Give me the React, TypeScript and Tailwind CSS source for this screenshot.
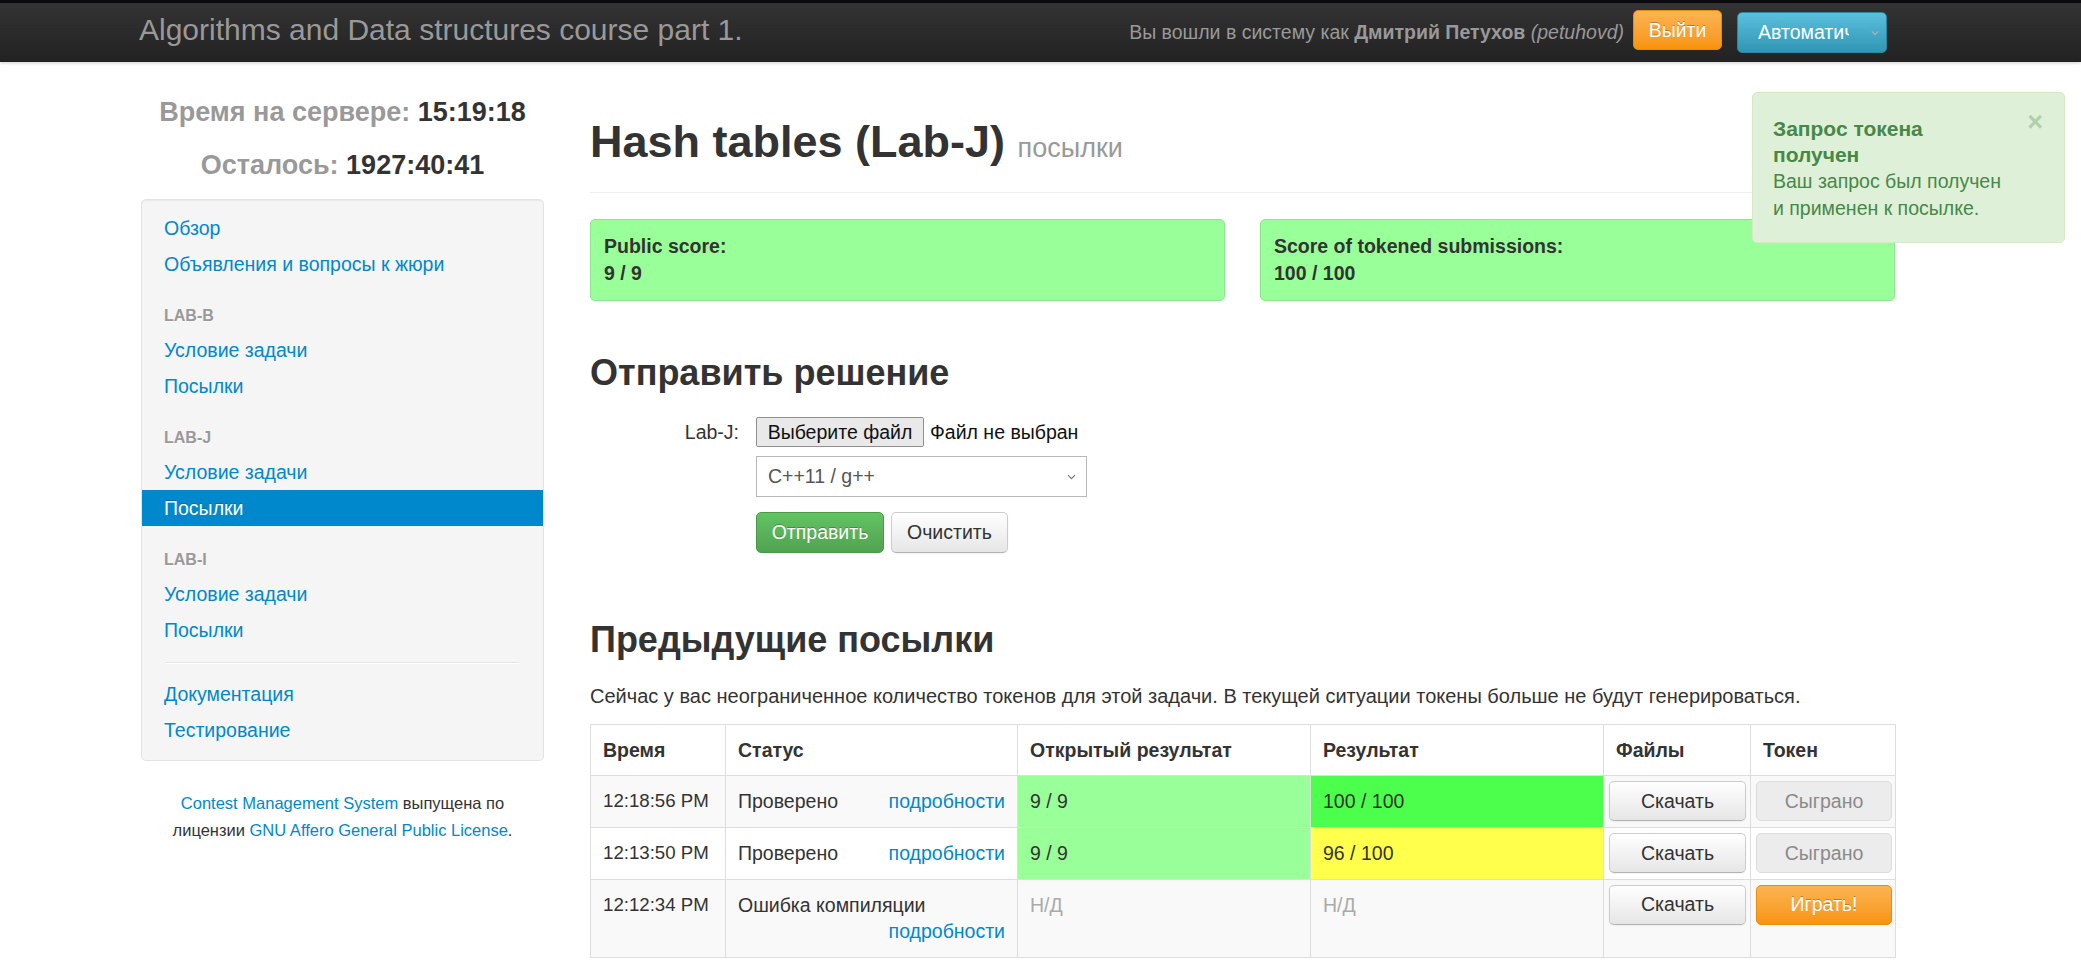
import React from "react";

const Chevron = ({ color = "#666", w = 9, h = 6, sw = 1.2 }: { color?: string; w?: number; h?: number; sw?: number }) => (
  <svg width={w} height={h} viewBox="0 0 9 6" fill="none">
    <path d="M1 1.2l3.5 3.5L8 1.2" stroke={color} strokeWidth={sw} />
  </svg>
);

const NavItem = ({ label, active = false }: { label: string; active?: boolean }) => (
  <div
    className={
      "h-[36px] leading-[36px] pl-[22px] " +
      (active ? "bg-[#0088cc] text-white [text-shadow:0_-1px_0_rgba(0,0,0,0.2)]" : "text-[#0088cc]")
    }
  >
    {label}
  </div>
);

const NavHeader = ({ label }: { label: string }) => (
  <div className="mt-[14px] h-[36px] leading-[40px] pl-[22px] text-[16px] font-bold uppercase text-[#999] [text-shadow:0_1px_0_rgba(255,255,255,0.5)]">
    {label}
  </div>
);

const DefaultBtn = ({ children, className = "" }: { children: React.ReactNode; className?: string }) => (
  <div
    className={
      "flex items-center justify-center rounded-[5px] border border-[#ccc] border-b-[#b3b3b3] bg-linear-to-b from-white to-[#e6e6e6] text-[#333] shadow-[inset_0_1px_0_rgba(255,255,255,0.2),0_1px_2px_rgba(0,0,0,0.05)] " +
      className
    }
  >
    {children}
  </div>
);

const DisabledBtn = ({ children }: { children: React.ReactNode }) => (
  <div className="flex h-[40px] w-full items-center justify-center rounded-[5px] border border-[#dcdcdc] bg-[#ececec] text-[#8a8a8a]">
    {children}
  </div>
);

const WarnBtn = ({ children, className = "" }: { children: React.ReactNode; className?: string }) => (
  <div
    className={
      "flex items-center justify-center rounded-[5px] border border-[#e38d13] bg-linear-to-b from-[#fbb450] to-[#f89406] text-white [text-shadow:0_-1px_0_rgba(0,0,0,0.25)] " +
      className
    }
  >
    {children}
  </div>
);

const cell = "border border-[#ddd] px-[12px] py-[12px] align-top";
const btnCell = "border border-[#ddd] p-[5px] align-top";

export default function App() {
  return (
    <div className="relative min-h-[960px] bg-white font-['Liberation_Sans',Arial,sans-serif] text-[19.5px] leading-[26.67px] text-[#333]">
      {/* Navbar */}
      <div className="flex h-[62px] border-t-[3px] border-[#0b0b0f] bg-linear-to-b from-[#333333] to-[#222222] shadow-[0_1px_3px_rgba(0,0,0,0.2)]">
        <div className="ml-[139px] mt-[12px] text-[30px] leading-[30px] text-[#999]">
          Algorithms and Data structures course part 1.
        </div>
        <div className="ml-auto mr-[194px] flex items-start">
          <span className="mt-[16px] whitespace-nowrap text-[#999]">
            Вы вошли в систему как <b>Дмитрий Петухов</b> <i>(petuhovd)</i>
          </span>
          <WarnBtn className="ml-[9px] mt-[7px] h-[40px] w-[89px]">Выйти</WarnBtn>
          <div className="relative ml-[15px] mt-[9px] flex h-[41px] w-[150px] items-center rounded-[5px] border border-[#2a87a2] bg-linear-to-b from-[#5bc0de] to-[#2f96b4]">
            <span className="ml-[20px] w-[91px] overflow-hidden whitespace-nowrap text-white">Автоматически</span>
            <span className="absolute right-[7px] top-[17px] flex">
              <Chevron color="#a3b3bb" w={8} h={6} sw={1.4} />
            </span>
          </div>
        </div>
      </div>

      {/* Body */}
      <div className="flex">
        {/* Sidebar */}
        <div className="ml-[141px] w-[403px] shrink-0">
          <div className="pt-[24px] text-center text-[27px] font-bold leading-[53px]">
            <div>
              <span className="text-[#999]">Время на сервере:</span> <span className="text-[#333]">15:19:18</span>
            </div>
            <div>
              <span className="text-[#999]">Осталось:</span> <span className="text-[#333]">1927:40:41</span>
            </div>
          </div>
          <div className="mt-[7px] rounded-[5px] border border-[#e3e3e3] bg-[#f5f5f5] pt-[10px] pb-[12px] shadow-[inset_0_1px_1px_rgba(0,0,0,0.05)]">
            <NavItem label="Обзор" />
            <NavItem label="Объявления и вопросы к жюри" />
            <NavHeader label="Lab-B" />
            <NavItem label="Условие задачи" />
            <NavItem label="Посылки" />
            <NavHeader label="Lab-J" />
            <NavItem label="Условие задачи" />
            <NavItem label="Посылки" active />
            <NavHeader label="Lab-I" />
            <NavItem label="Условие задачи" />
            <NavItem label="Посылки" />
            <div className="mx-[24px] mt-[14px] mb-[12px] h-[2px] border-b border-white bg-[#e5e5e5]" />
            <NavItem label="Документация" />
            <NavItem label="Тестирование" />
          </div>
          <div className="mt-[29px] text-center text-[16.5px] leading-[27px]">
            <span className="text-[#0088cc]">Contest Management System</span> выпущена по
            <br />
            лицензии <span className="text-[#0088cc]">GNU Affero General Public License</span>.
          </div>
        </div>

        {/* Main */}
        <div className="ml-[46px] w-[1305px] shrink-0">
          <div className="mt-[53px] border-b border-[#eee] pb-[17px]">
            <h1 className="text-[45px] font-bold leading-[53px] text-[#333]">
              Hash tables (Lab-J) <small className="text-[27px] font-normal text-[#999]">посылки</small>
            </h1>
          </div>

          <div className="mt-[26px] grid grid-cols-2 gap-[35px]">
            <div className="h-[82px] rounded-[5px] border border-[#8de58d] bg-[#99ff99] px-[13px] pt-[13px] font-bold leading-[27px]">
              Public score:
              <br />9 / 9
            </div>
            <div className="h-[82px] rounded-[5px] border border-[#8de58d] bg-[#99ff99] px-[13px] pt-[13px] font-bold leading-[27px]">
              Score of tokened submissions:
              <br />100 / 100
            </div>
          </div>

          <h2 className="mt-[45px] text-[36px] font-bold leading-[53px]">Отправить решение</h2>

          <div className="mt-[18px] flex h-[30px] items-center">
            <div className="w-[149px] text-right">Lab-J:</div>
            <div className="ml-[17px] flex h-[30px] w-[168px] items-center justify-center rounded-[2px] border border-[#8f8f8f] bg-[#e9e9e9] text-[#111]">
              Выберите файл
            </div>
            <span className="ml-[6px] text-[#111]">Файл не выбран</span>
          </div>
          <div className="ml-[166px] mt-[9px] flex h-[41px] w-[331px] items-center justify-between border border-[#b8b8b8] bg-white pl-[11px] pr-[10px] text-[#555]">
            <span>C++11 / g++</span>
            <Chevron color="#777" w={9} h={6} />
          </div>
          <div className="ml-[166px] mt-[15px] flex gap-[7px]">
            <div className="flex h-[41px] w-[128px] items-center justify-center rounded-[5px] border border-[#4a9a4a] bg-linear-to-b from-[#62c462] to-[#51a351] text-white [text-shadow:0_-1px_0_rgba(0,0,0,0.25)]">
              Отправить
            </div>
            <DefaultBtn className="h-[41px] w-[117px]">Очистить</DefaultBtn>
          </div>

          <h2 className="mt-[60px] text-[36px] font-bold leading-[53px]">Предыдущие посылки</h2>
          <p className="mt-[17px] text-[20px]">
            Сейчас у вас неограниченное количество токенов для этой задачи. В текущей ситуации токены больше не будут генерироваться.
          </p>

          <table className="mt-[14px] w-[1305px] table-fixed border-collapse border border-[#ddd]">
            <colgroup>
              <col className="w-[135px]" />
              <col className="w-[292px]" />
              <col className="w-[293px]" />
              <col className="w-[293px]" />
              <col className="w-[147px]" />
              <col className="w-[145px]" />
            </colgroup>
            <thead>
              <tr className="bg-white">
                {["Время", "Статус", "Открытый результат", "Результат", "Файлы", "Токен"].map((h) => (
                  <th key={h} className={cell + " text-left font-bold leading-[26.67px]"}>
                    {h}
                  </th>
                ))}
              </tr>
            </thead>
            <tbody>
              <tr className="bg-[#f9f9f9]">
                <td className={cell + " whitespace-nowrap text-[18.67px]"}>12:18:56 PM</td>
                <td className={cell}>
                  <span className="float-right text-[#0088cc]">подробности</span>Проверено
                </td>
                <td className={cell + " bg-[#99ff99]"}>9 / 9</td>
                <td className={cell + " bg-[#4cff4c]"}>100 / 100</td>
                <td className={btnCell + " pr-[4px]"}>
                  <DefaultBtn className="h-[40px] w-full">Скачать</DefaultBtn>
                </td>
                <td className={btnCell + " pr-[3px]"}>
                  <DisabledBtn>Сыграно</DisabledBtn>
                </td>
              </tr>
              <tr className="bg-white">
                <td className={cell + " whitespace-nowrap text-[18.67px]"}>12:13:50 PM</td>
                <td className={cell}>
                  <span className="float-right text-[#0088cc]">подробности</span>Проверено
                </td>
                <td className={cell + " bg-[#99ff99]"}>9 / 9</td>
                <td className={cell + " bg-[#ffff4c]"}>96 / 100</td>
                <td className={btnCell + " pr-[4px]"}>
                  <DefaultBtn className="h-[40px] w-full">Скачать</DefaultBtn>
                </td>
                <td className={btnCell + " pr-[3px]"}>
                  <DisabledBtn>Сыграно</DisabledBtn>
                </td>
              </tr>
              <tr className="bg-[#f9f9f9]">
                <td className={cell + " whitespace-nowrap text-[18.67px]"}>12:12:34 PM</td>
                <td className={cell}>
                  <div>Ошибка компиляции</div>
                  <div className="text-right text-[#0088cc]">подробности</div>
                </td>
                <td className={cell + " text-[#aaa]"}>Н/Д</td>
                <td className={cell + " text-[#aaa]"}>Н/Д</td>
                <td className={btnCell + " pr-[4px]"}>
                  <DefaultBtn className="h-[40px] w-full">Скачать</DefaultBtn>
                </td>
                <td className={btnCell + " pr-[3px]"}>
                  <WarnBtn className="h-[40px] w-full">Играть!</WarnBtn>
                </td>
              </tr>
            </tbody>
          </table>
        </div>
      </div>

      {/* Notification */}
      <div className="absolute left-[1752px] top-[92px] h-[151px] w-[313px] rounded-[5px] border border-[#d6e9c6] bg-[#dff0d8] pl-[20px] pr-[21px] pt-[23px] text-[#468847]">
        <span className="float-right -mt-[7px] text-[27px] font-bold leading-[26px] text-[#468847] opacity-30">×</span>
        <div className="text-[21px] font-bold leading-[26px]">
          Запрос токена
          <br />
          получен
        </div>
        <div className="leading-[27px]">
          Ваш запрос был получен
          <br />и применен к посылке.
        </div>
      </div>
    </div>
  );
}
